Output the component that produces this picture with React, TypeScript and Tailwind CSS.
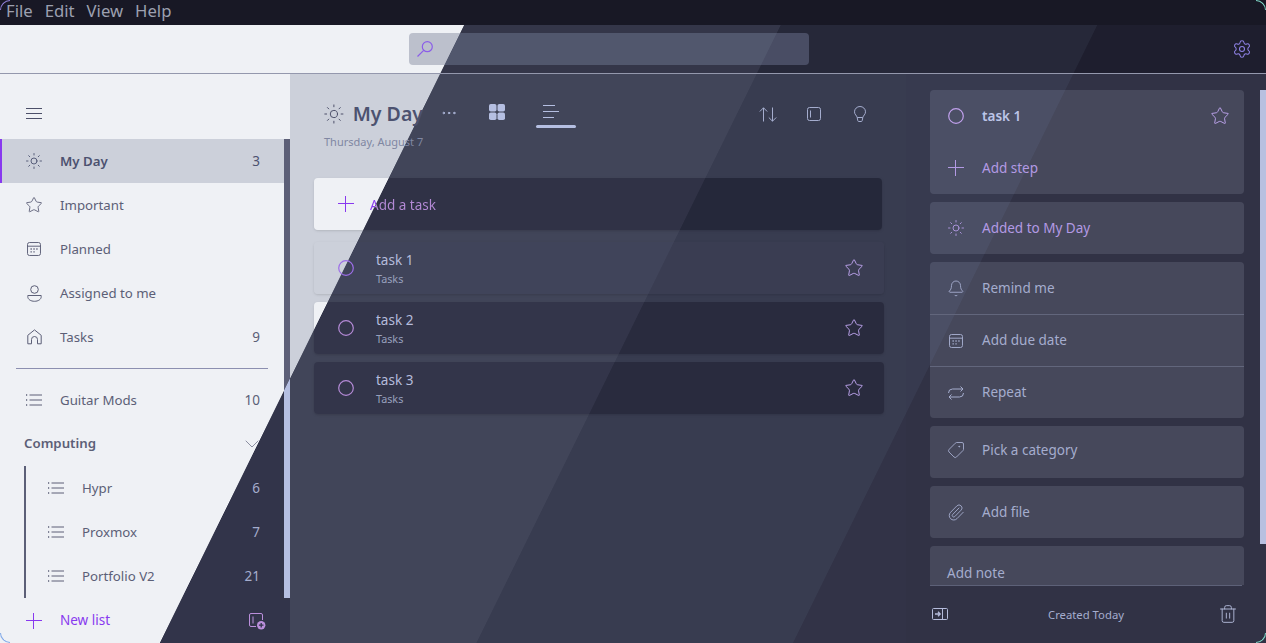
import { Sun, Star, Settings, ChevronDown, Ellipsis, Bell, Tag, Paperclip, Trash2 } from 'lucide-react';

// diagonal bands: every surface paints the same page-fixed gradient in its own colours
const toolbarBg = 'bg-[linear-gradient(116.22deg,#eff1f5_427px,#343649_427.8px,#343649_711px,#262839_711.8px,#262839_995px,#1e1e2e_995.8px)] bg-fixed';
const searchBg = 'bg-[linear-gradient(116.22deg,#bcc0cc_427px,#51576d_427.8px,#51576d_711px,#494d64_711.8px)] bg-fixed';
const sidebarBg = 'bg-[linear-gradient(116.22deg,#eff1f5_427px,#32344a_427.8px)] bg-fixed';
const thumbBg = 'bg-[linear-gradient(116.22deg,#5c5f77_427px,#b5bfe2_427.8px)] bg-fixed';
const mainBg = 'bg-[linear-gradient(116.22deg,#ccd0da_427px,#414559_427.8px,#414559_711px,#383c50_711.8px,#383c50_995px,#323347_995.8px)] bg-fixed';
const addBg = 'bg-[linear-gradient(116.22deg,#eff1f5_427px,#303246_427.8px,#303246_711px,#25283a_711.8px)] bg-fixed';
const selBg = 'bg-[linear-gradient(116.22deg,#ccd0da_427px,#40445a_427.8px,#40445a_711px,#3a3d52_711.8px,#3a3d52_995px,#343649_995.8px)] bg-fixed';
const taskBg = 'bg-[linear-gradient(116.22deg,#eff1f5_427px,#33354a_427.8px,#33354a_711px,#292b3e_711.8px,#292b3e_995px,#24263a_995.8px)] bg-fixed';
const detailBg = 'bg-[linear-gradient(116.22deg,#373a4f_995px,#313245_995.8px)] bg-fixed';
const cardBg = 'bg-[linear-gradient(116.22deg,#4b4f65_995px,#46485b_995.8px)] bg-fixed';
const addTextBg = 'bg-[linear-gradient(116.22deg,#8839ef_427px,#b48ad6_427.8px)] bg-fixed bg-clip-text text-transparent';

function Calendar() {
  return (
    <svg width="14" height="14" viewBox="0 0 16 16" fill="none" stroke="currentColor" strokeWidth="1.1">
      <rect x="0.600" y="0.600" width="14.800" height="14.800" rx="2.200" />
      <path d="M0.600 4.800h14.800" />
      <path d="M4 8h1.500M7.300 8h1.500M10.600 8h1.500M4 11.300h1.500M7.300 11.300h1.500" strokeWidth="1.600" />
    </svg>
  );
}

function Person() {
  return (
    <svg width="15" height="17" viewBox="0 0 15 17" fill="none" stroke="currentColor" strokeWidth="1">
      <circle cx="7.500" cy="4.500" r="3.800" />
      <path d="M0.800 10.500h13.400v1.200c0 2.700-3 4.600-6.700 4.600S0.800 14.400 0.800 11.700z" />
    </svg>
  );
}

function Home() {
  return (
    <svg width="15" height="16" viewBox="0 0 15 16" fill="none" stroke="currentColor" strokeWidth="1">
      <path d="M0.800 14.800V6.300L7.500 0.900l6.700 5.400v8.500h-3.700V10.500a3 3 0 0 0-6 0v4.300z" strokeLinejoin="round" />
    </svg>
  );
}

function Hamburger() {
  return (
    <svg width="16" height="11" viewBox="0 0 16 11" fill="none" stroke="currentColor" strokeWidth="1">
      <path d="M0 0.500h16M0 5.500h16M0 10.500h16" />
    </svg>
  );
}

function ListIcon() {
  return (
    <svg width="16" height="12" viewBox="0 0 16 12" fill="none" stroke="currentColor" strokeWidth="1">
      <path d="M3.500 1h12.500M3.500 6h12.500M3.500 11h12.500" />
      <path d="M0.600 0.200v1.600M0.600 5.200v1.600M0.600 10.200v1.600" strokeWidth="1.200" />
    </svg>
  );
}

function PlusIcon() {
  return (
    <svg width="16" height="16" viewBox="0 0 16 16" fill="none" stroke="currentColor" strokeWidth="1">
      <path d="M0 7.500h16M7.500 0v16" />
    </svg>
  );
}

function Ring({ className }: { className: string }) {
  return (
    <svg width="16" height="16" viewBox="0 0 16 16" fill="none" stroke="currentColor" strokeWidth="1.200" className={className}>
      <circle cx="8" cy="8" r="7.300" />
    </svg>
  );
}

function SearchIcon() {
  return (
    <svg width="16" height="16" viewBox="0 0 16 16" fill="none" stroke="currentColor" strokeWidth="1.200" className="text-[#8b5de8]">
      <circle cx="10.300" cy="5.700" r="5" />
      <path d="M6.700 9.300 0.500 15.500" />
    </svg>
  );
}

function NewListIcon() {
  return (
    <svg width="18" height="18" viewBox="0 0 18 18" fill="none" stroke="currentColor" strokeWidth="1">
      <path d="M8 14.500H3a1.500 1.500 0 0 1-1.500-1.500V3A1.500 1.500 0 0 1 3 1.500h10A1.500 1.500 0 0 1 14.500 3v5" />
      <path d="M5 4.500v7" />
      <circle cx="13.200" cy="13.200" r="4.200" fill="currentColor" stroke="none" />
      <path d="M13.200 10.900v4.600M10.900 13.200h4.600" stroke="#32344a" strokeWidth="1.300" />
    </svg>
  );
}

function GridIcon() {
  return (
    <svg width="16" height="16" viewBox="0 0 16 16" fill="currentColor">
      <rect x="0" y="0" width="7.500" height="7.500" rx="1.800" />
      <rect x="8.500" y="0" width="7.500" height="7.500" rx="1.800" />
      <rect x="0" y="8.500" width="7.500" height="7.500" rx="1.800" />
      <rect x="8.500" y="8.500" width="7.500" height="7.500" rx="1.800" />
    </svg>
  );
}

function LinesIcon() {
  return (
    <svg width="16" height="14" viewBox="0 0 16 14" fill="none" stroke="currentColor" strokeWidth="1">
      <path d="M0 1.500h12M0 7.500h16M0 13.500h11" />
    </svg>
  );
}

function SortIcon() {
  return (
    <svg width="18" height="15" viewBox="0 0 18 15" fill="none" stroke="currentColor" strokeWidth="1">
      <path d="M4.500 14.500V0.800M0.800 4.500l3.700-3.700 3.700 3.700" />
      <path d="M13.500 0.500v13.700M9.800 10.500l3.700 3.700 3.700-3.700" />
    </svg>
  );
}

function PanelIcon() {
  return (
    <svg width="14" height="14" viewBox="0 0 14 14" fill="none" stroke="currentColor" strokeWidth="1">
      <rect x="0.500" y="0.500" width="13" height="13" rx="2" />
      <path d="M3.500 3.500v7" />
    </svg>
  );
}

function BulbIcon() {
  return (
    <svg width="12" height="16" viewBox="0 0 12 16" fill="none" stroke="currentColor" strokeWidth="1">
      <path d="M3.200 11.500C2.800 9.500 0.500 8.600 0.500 5.800a5.500 5.300 0 0 1 11 0c0 2.800-2.300 3.700-2.700 5.700z" />
      <path d="M3.200 11.500l.6 3.200a1 1 0 0 0 1 .8h2.400a1 1 0 0 0 1-.8l.6-3.200" />
    </svg>
  );
}

function RepeatIcon() {
  return (
    <svg width="16" height="16" viewBox="0 0 16 16" fill="none" stroke="currentColor" strokeWidth="1">
      <path d="M0.500 8a4 4 0 0 1 4-4h10.500M12.500 1.500 15 4l-2.500 2.500" />
      <path d="M15.500 8a4 4 0 0 1-4 4H1M3.500 9.500 1 12l2.500 2.500" />
    </svg>
  );
}

function PaneOutIcon() {
  return (
    <svg width="16" height="12" viewBox="0 0 16 12" fill="none" stroke="currentColor" strokeWidth="1">
      <rect x="0.500" y="0.500" width="15" height="11" rx="1" />
      <path d="M10.500 0.500v11" />
      <path d="M3 6h5M6 3.800 8.200 6 6 8.200" strokeWidth="1.300" />
    </svg>
  );
}

function NavItem({ icon, label, count, active, countLight, indent }: any) {
  return (
    <div className={`flex h-[44px] shrink-0 items-center pr-[24px] ${active ? 'bg-[#ccd0da] border-l-2 border-[#8839ef] pl-[23px] font-semibold text-[#4c5270]' : indent ? 'pl-[21px] text-[#5c5f77]' : 'pl-[25px] text-[#5c5f77]'}`}>
      <span className="flex w-[18px] justify-center">{icon}</span>
      <span className="ml-[17px] flex-1 pb-[1px] text-[13.250px] leading-[20px]">{label}</span>
      {count && <span className={`text-[13.500px] font-normal ${countLight ? 'text-[#a5adce]' : ''}`}>{count}</span>}
    </div>
  );
}

function Task({ name, bg, selected }: any) {
  return (
    <div className={`flex h-[52px] items-center rounded-[4px] pl-[24px] pr-[20px] shadow-sm ${bg}`}>
      <Ring className={selected ? 'text-[#9d6ee8]' : 'text-[#b48ad6]'} />
      <div className="ml-[22px] flex flex-1 flex-col">
        <span className="text-[13.500px] leading-[20px] text-[#b5bcdc]">{name}</span>
        <span className="mt-[1px] text-[10.800px] leading-[16px] text-[#98a0bd]">Tasks</span>
      </div>
      <Star size={20} strokeWidth={1.2} className="text-[#b79fe6]" />
    </div>
  );
}

function DetailRow({ icon, label, accent, className = 'h-[52px]' }: any) {
  return (
    <div className={`flex items-center pl-[17px] ${className} ${accent ? 'text-[#b39ae4]' : 'text-[#a5adce]'}`}>
      <span className="flex w-[18px] justify-center">{icon}</span>
      <span className="ml-[17px] text-[13.500px]">{label}</span>
    </div>
  );
}

function Corner({ className }: { className: string }) {
  return <div className={`absolute h-[10px] w-[10px] ${className}`} />;
}

export default function App() {
  return (
    <div className="relative flex h-screen w-screen flex-col overflow-hidden bg-[#11111b] font-['Noto_Sans',sans-serif]">
      <div className="flex h-[25px] shrink-0 items-center gap-[12px] bg-[#181825] pb-[2px] pl-[6px] text-[16.700px] leading-none text-[#9ca0b0]">
        <span>File</span>
        <span>Edit</span>
        <span>View</span>
        <span>Help</span>
      </div>

      <div className={`flex h-[49px] shrink-0 items-center justify-between border-b border-[#9498ad] pl-[409px] pr-[14px] ${toolbarBg}`}>
        <div className={`flex h-[32px] w-[400px] items-center rounded-[4px] pl-[8px] ${searchBg}`}>
          <SearchIcon />
        </div>
        <Settings size={20} strokeWidth={1.250} className="text-[#8f82e6]" />
      </div>

      <div className="flex min-h-0 flex-1">
        <aside className={`flex w-[290px] shrink-0 ${sidebarBg}`}>
          <div className="flex min-w-0 flex-1 flex-col">
            <div className="flex h-[65px] shrink-0 items-start pl-[26px] pt-[34px] text-[#4c4f69]">
              <Hamburger />
            </div>
            <NavItem active icon={<Sun size={20} strokeWidth={1.200} />} label="My Day" count="3" />
            <NavItem icon={<Star size={20} strokeWidth={1.200} />} label="Important" />
            <NavItem icon={<Calendar />} label="Planned" />
            <NavItem icon={<Person />} label="Assigned to me" />
            <NavItem icon={<Home />} label="Tasks" count="9" />
            <div className="mx-[16px] my-[9px] h-px bg-[#8c8fb0]" />
            <NavItem icon={<ListIcon />} label="Guitar Mods" count="10" />
            <div className="flex h-[44px] shrink-0 items-center pl-[24px] pr-[24px]">
              <span className="flex-1 text-[13.250px] font-semibold text-[#5c5f77]">Computing</span>
              <ChevronDown size={24} strokeWidth={1} className="mr-[-4px] text-[#8c8fa1]" />
            </div>
            <div className="ml-[24px] border-l-2 border-[#5c5f77]">
              <NavItem indent countLight icon={<ListIcon />} label="Hypr" count="6" />
              <NavItem indent countLight icon={<ListIcon />} label="Proxmox" count="7" />
              <NavItem indent countLight icon={<ListIcon />} label="Portfolio V2" count="21" />
            </div>
            <div className="flex h-[45px] shrink-0 items-center pl-[26px] pr-[18px]">
              <span className="text-[#8839ef]"><PlusIcon /></span>
              <span className="ml-[18px] flex-1 text-[13.500px] text-[#8839ef]">New list</span>
              <span className="text-[#bb8fdc]"><NewListIcon /></span>
            </div>
          </div>
          <div className="w-[6px] shrink-0 pt-[65px]">
            <div className={`h-[459px] ${thumbBg}`} />
          </div>
        </aside>

        <main className={`flex min-w-0 flex-1 flex-col pl-[24px] pr-[22px] ${mainBg}`}>
          <div className="flex h-[104px] shrink-0 items-start pl-[9px] pt-[25px]">
            <div className="flex w-[100px] flex-col">
              <div className="flex h-[30px] items-center">
                <Sun size={24} strokeWidth={1.100} className="text-[#4c4f69]" />
                <span className="ml-[8px] whitespace-nowrap text-[19.500px] font-semibold text-[#4c5270]">My Day</span>
              </div>
              <span className="ml-[1px] mt-[5px] whitespace-nowrap text-[11px] leading-[16px] text-[#8087a2]">Thursday, August 7</span>
            </div>
            <Ellipsis size={18} strokeWidth={1.300} className="ml-[17px] mt-[5px] text-[#b5bfe2]" />
            <span className="ml-[31px] mt-[5px] text-[#b5bfe2]"><GridIcon /></span>
            <div className="ml-[31px] mt-[5px] flex w-[40px] flex-col text-[#b5bfe2]">
              <span className="ml-[7px]"><LinesIcon /></span>
              <div className="mt-[7px] h-[3px] w-[40px] rounded-full bg-[#b5bfe2]" />
            </div>
            <div className="ml-auto mr-[18px] mt-[7px] flex items-center text-[#a5adce]">
              <SortIcon />
              <span className="ml-[30px]"><PanelIcon /></span>
              <span className="ml-[33px]"><BulbIcon /></span>
            </div>
          </div>
          <div className={`mb-[12px] mr-[2px] flex h-[52px] shrink-0 items-center rounded-[4px] pl-[24px] shadow-sm ${addBg}`}>
            <span className="text-[#8839ef]"><PlusIcon /></span>
            <span className={`ml-[16px] mt-[2px] text-[13.500px] ${addTextBg}`}>Add a task</span>
          </div>
          <div className="flex flex-col gap-[8px]">
            <Task name="task 1" bg={selBg} selected />
            <Task name="task 2" bg={taskBg} />
            <Task name="task 3" bg={taskBg} />
          </div>
        </main>

        <aside className={`flex w-[360px] shrink-0 flex-col ${detailBg}`}>
          <div className="flex min-h-0 flex-1 overflow-hidden">
            <div className="ml-[24px] flex w-[314px] flex-col gap-[8px] pt-[16px]">
              <div className={`rounded-[4px] ${cardBg}`}>
                <div className="flex h-[52px] items-center pl-[18px] pr-[14px]">
                  <Ring className="text-[#c0a0ec]" />
                  <span className="ml-[18px] flex-1 pt-[1px] text-[13.500px] font-semibold text-[#bcc5e8]">task 1</span>
                  <Star size={20} strokeWidth={1.200} className="text-[#b79fe6]" />
                </div>
                <DetailRow accent icon={<PlusIcon />} label="Add step" />
              </div>
              <div className={`rounded-[4px] ${cardBg}`}>
                <DetailRow accent icon={<Sun size={20} strokeWidth={1.200} />} label="Added to My Day" />
              </div>
              <div className={`rounded-[4px] ${cardBg}`}>
                <DetailRow className="h-[53px] border-b border-[#62667c]" icon={<Bell size={19} strokeWidth={1.200} />} label="Remind me" />
                <DetailRow className="h-[52px] border-b border-[#62667c]" icon={<Calendar />} label="Add due date" />
                <DetailRow className="h-[51px]" icon={<RepeatIcon />} label="Repeat" />
              </div>
              <div className={`rounded-[4px] ${cardBg}`}>
                <DetailRow className="h-[52px] pb-[4px]" icon={<Tag size={20} strokeWidth={1.200} className="-scale-x-100" />} label="Pick a category" />
              </div>
              <div className={`rounded-[4px] ${cardBg}`}>
                <DetailRow icon={<Paperclip size={19} strokeWidth={1.200} />} label="Add file" />
              </div>
              <div className={`h-[80px] shrink-0 rounded-[4px] pl-[17px] pt-[17px] text-[13.500px] text-[#a5adce] ${cardBg}`}>Add note</div>
            </div>
            <div className="ml-auto mt-[16px] h-[454px] w-[6px] bg-[#b8c0e0]" />
          </div>
          <div className="ml-[24px] mr-[24px] flex h-[58px] shrink-0 items-center justify-between border-t border-[#5d6178] pb-[2px] pl-[2px] pr-[4px] text-[#b5bcdc]">
            <PaneOutIcon />
            <span className="ml-[6px] mt-[4px] text-[11.300px] text-[#a5adce]">Created Today</span>
            <Trash2 size={20} strokeWidth={1.100} />
          </div>
        </aside>
      </div>

      <Corner className="left-0 top-0 rounded-tl-[10px] border-l border-t border-[#8f7fd8]" />
      <Corner className="right-0 top-0 rounded-tr-[10px] border-r border-t border-[#7fd8c8]" />
      <Corner className="bottom-0 left-0 rounded-bl-[10px] border-b border-l border-[#7fa8e8]" />
      <Corner className="bottom-0 right-0 rounded-br-[10px] border-b border-r border-[#7fd8c8]" />
    </div>
  );
}
